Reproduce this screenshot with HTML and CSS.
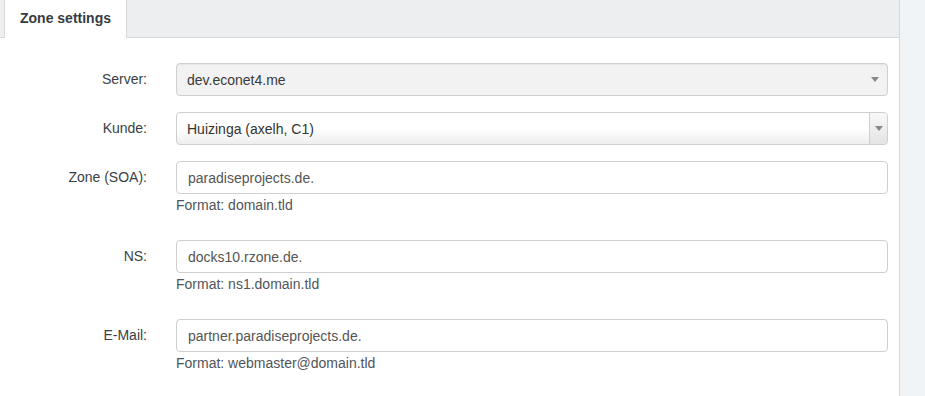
FILE: index.html
```html
<!DOCTYPE html>
<html lang="en">
<head>
  <meta charset="UTF-8" />
  <title>Zone settings</title>
  <link rel="stylesheet" href="styles.css">
</head>
<body>
  <main class="panel">
    <ul class="tabs">
      <li class="active">Zone settings</li>
    </ul>
    <form class="zone-form">
      <div class="form-row">
        <label>Server:</label>
        <div class="field">
          <div class="select disabled">
            <span>dev.econet4.me</span>
            <span class="caret"></span>
          </div>
        </div>
      </div>
      <div class="form-row">
        <label>Kunde:</label>
        <div class="field">
          <div class="select combo">
            <span>Huizinga (axelh, C1)</span>
            <span class="combo-btn"><span class="caret"></span></span>
          </div>
        </div>
      </div>
      <div class="form-row">
        <label>Zone (SOA):</label>
        <div class="field">
          <input type="text" value="paradiseprojects.de." />
          <p class="help">Format: domain.tld</p>
        </div>
      </div>
      <div class="form-row">
        <label>NS:</label>
        <div class="field">
          <input type="text" value="docks10.rzone.de." />
          <p class="help">Format: ns1.domain.tld</p>
        </div>
      </div>
      <div class="form-row">
        <label>E-Mail:</label>
        <div class="field">
          <input type="text" value="partner.paradiseprojects.de." />
          <p class="help">Format: webmaster@domain.tld</p>
        </div>
      </div>
    </form>
  </main>
</body>
</html>
```

FILE: styles.css
```css
* {
  box-sizing: border-box;
  font-family: "Liberation Sans", Arial, sans-serif;
}

body {
  margin: 0;
  background-color: #f0f4f7;
  height: 396px;
  overflow: hidden;
}

.panel {
  width: 900px;
  height: 396px;
  background-color: white;
  border-right: 1px solid #d5d8db;
}

.tabs {
  margin: 0;
  padding: 0 0 0 4px;
  height: 38px;
  display: flex;
  background-color: #edeef0;
  border-bottom: 1px solid #d6d8da;
}

.tabs li {
  list-style: none;
  height: 38px;
  width: 123px;
  padding-top: 10px;
  text-align: center;
  font-size: 14px;
  font-weight: bold;
  color: #363b40;
  background-color: white;
  border-left: 1px solid #d6d8da;
  border-right: 1px solid #d6d8da;
}

.zone-form {
  padding: 25px 11px 0 0;
}

.form-row {
  display: flex;
  margin-bottom: 16px;
}

.form-row label {
  width: 147px;
  flex-shrink: 0;
  text-align: right;
  font-size: 14px;
  color: #3a3f44;
  line-height: 33px;
}

.field {
  margin-left: 29px;
  flex: 1;
}

.select,
.field input {
  display: flex;
  align-items: center;
  width: 100%;
  height: 33px;
  border: 1px solid #cfcfcf;
  border-radius: 4px;
  font-size: 14px;
  color: #444;
}

.select {
  justify-content: space-between;
  padding: 0 10px;
}

.select.disabled {
  background-color: #f2f2f2;
  box-shadow: inset 0 1px 1px rgba(0, 0, 0, 0.05);
  color: #3a3a3a;
}

.select.combo {
  padding-right: 0;
  background: linear-gradient(#ffffff 50%, #eeeeee);
  color: #333;
}

.combo-btn {
  width: 18px;
  height: 100%;
  border-left: 1px solid #cfcfcf;
  display: flex;
  align-items: center;
  justify-content: center;
  background: linear-gradient(#f8f8f8, #e4e4e4);
  border-radius: 0 4px 4px 0;
}

.caret {
  width: 0;
  height: 0;
  border-left: 4px solid transparent;
  border-right: 4px solid transparent;
  border-top: 5px solid #888;
}

.select.disabled .caret {
  margin-right: -2px;
}

.field input {
  padding: 0 11px;
  background-color: white;
  color: #555;
  outline: none;
}

.help {
  margin: 2px 0 0 0;
  font-size: 14px;
  line-height: 18px;
  color: #50555a;
}

.form-row:nth-child(n+3) {
  margin-bottom: 26px;
}
```
